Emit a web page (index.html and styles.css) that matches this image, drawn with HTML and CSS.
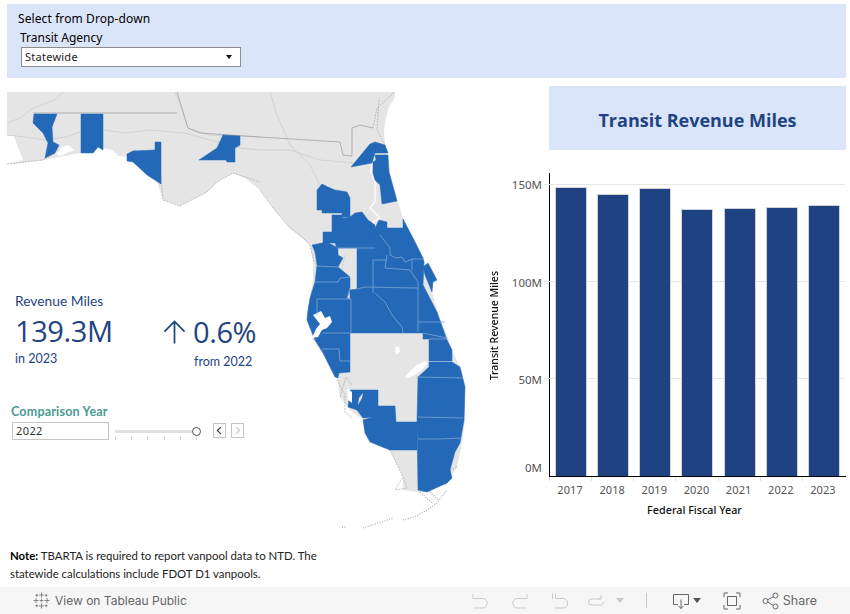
FILE: index.html
```html
<!DOCTYPE html>
<html lang="en">
<head>
<meta charset="utf-8">
<title>Transit Revenue Miles</title>
<link rel="stylesheet" href="styles.css">
</head>
<body>
<div class="page">
  <section class="filter">
    <div class="filter-title">Select from Drop-down</div>
    <div class="filter-label">Transit Agency</div>
    <div class="select"><span>Statewide</span><i class="caret"></i></div>
  </section>

  <div class="main">
    <section class="left">
      <svg class="map" viewBox="7 92 470 445" aria-hidden="true">
        <!-- land -->
        <path class="land" d="M7 92H395L394 99 389 107 386 118 384 130 385 145 387 155 390 172 395 192 403 218 413 238 423 258 430 283 438 315 447 335 452 350 460 367 465 387 465 420 462 443 457 467 447 483 427 492 418 492 403 490 403 477 390 450 378 446 370 440 363 420 350 410 340 397 337 377 323 353 313 340 307 320 307 315 310 298 313 280 313 262 310 245 290 228 273 208 260 190 245 178 233 173 217 182 207 192 180 206 163 200 157 182 147 172 127 157 100 153 80 153 43 160 20 163 7 164Z"/>
        <!-- white water on land -->
        <path class="water" d="M7 136L14 136 19 150 23 160 12 163 7 164ZM55 153L62 147 68 145 74 150 60 156ZM93 153L98 147 112 150 118 155 106 155ZM395 347L399 346 400 352 396 355ZM405 376L417 365 425 361 428 363 420 372 408 378Z"/>
        <path class="river" d="M372 163L371 172 375 182 375 202 370 208 380 218 373 222 380 232"/>
        <!-- borders and roads -->
        <path class="road" d="M7 123L20 118 33 108 55 100 63 92M7 135L25 137 45 140 66 137 80 132 103 130 125 133 150 130 185 133 210 140 240 148 260 150 290 150 320 160 355 163M175 92L182 110 188 128 210 135 260 137M270 92L277 115 290 145 310 165 320 185M320 185L325 195M345 255L342 268 345 280"/>
        <path class="border" d="M33 113H177M177 92L181 105 188 128 200 133 260 137 340 142 343 155 352 156 352 128 360 125 373 128"/>
        <path class="coast" d="M7 164L43 160 60 150M127 157L135 150 160 165 163 200 180 206 207 192 217 182 233 173 260 182M260 190L273 208 290 228 300 235 310 245M373 128L377 108 395 92M379 100L377 130 385 145M310 245L314 262M337 380L345 395 345 412 352 418M340 397L346 377 352 385M390 450L403 477 407 488 395 490 403 477M457 467L451 470 449 478 445 486M373 433L390 450"/>
        <!-- service areas -->
        <g class="blue">
          <path d="M34 114H57L52 127 53 142 59 145 55 153 45 158 48 143 43 133 33 123Z"/>
          <path d="M81 114H103V150L98 147 93 153H81Z"/>
          <path d="M127 154L133 151 155 150V142H161V184L147 175 133 162 127 161Z"/>
          <path d="M199 160L217 148 223 135 240 136V145L235 148V162H227L226 160Z"/>
          <path d="M351 167L370 144 375 142 385 145 388 153H375L372 163 351 167Z"/>
          <path d="M375 155H388L389 172 397 201 382 204 380 185 375 180 373 173 373 162 376 160Z"/>
          <path d="M317 190L322 184 328 187 335 190 347 192 350 198V217H342V213H322V210H317Z"/>
          <path d="M332 215H342L343 218 350 217 355 213 362 212 368 220 375 225V248H337L335 243H323V232H332Z"/>
          <path d="M312 245L327 242 338 248V255L343 258 338 267 350 277V290L347 298 351 300 350 333H323L315 340 307 320 308 310 310 298 315 282 317 265 315 252Z"/>
          <path d="M350 290L357 289V248H375V228L379 220 387 222V228H403V219L413 238 423 258 424 262 423 285 437 312 447 340 452 350V361H429V339H423V333H350Z"/>
          <path d="M423 267L428 263 437 280 433 282 432 292 425 275Z"/>
          <path d="M315 340L323 333H350V372L339 373 338 378 335 377 323 353Z"/>
          <path d="M350 390H378V410L373 412V417L363 418 357 410 348 407Z"/>
          <path d="M363 420L373 417V412L378 406H395L396 422H417V450H390L370 442 365 433Z"/>
          <path d="M429 362H452L460 367 465 387 464 420 460 443 455 452 450 470 452 478 447 483 427 492 418 490 417 422 418 377 429 367Z"/>
        </g>
        <path class="bay" d="M313 315L321 311 325 318 330 316 332 322 327 328 322 330 318 337 312 338 316 329 320 324ZM347 388L352 392 352 403 348 400Z"/>
        <path class="leaf" d="M358 405L362 398 363 393 359 398Z"/>
        <path class="lines" d="M337 248H375M380 235L390 248V255M387 255L385 268 410 270 418 282V288M373 260H387M373 260V293M412 259V270M390 255L396 258 402 257 405 262 412 259H423M357 289L365 287 418 288M375 293L385 302 392 315 402 327 403 333M350 288L347 298 351 299H317V315M315 282H338L340 278 350 277M317 266L338 267M351 299V333M418 288V332M418 322H445M423 333L447 338M429 339H447M323 333H350M322 349H339L340 361H350M417 377L463 378M418 417L463 418M418 439H438L462 438"/>
        <path class="keys" d="M363 528L372 525 385 521 393 518M403 520L416 516 427 510 437 503 447 490M420 492L432 503M430 492L438 500M342 527H346"/>
      </svg>

      <div class="kpis">
        <div class="kpi-main">
          <div class="kpi-label">Revenue Miles</div>
          <div class="kpi-value">139.3M</div>
          <div class="kpi-sub">in 2023</div>
        </div>
        <div class="kpi-change">
          <div class="kpi-row">
            <svg class="arrow" viewBox="0 0 24 26" aria-hidden="true"><path d="M12 25V2M1.500 12.500L12 2 22.500 12.500"/></svg>
            <span class="kpi-value">0.6%</span>
          </div>
          <div class="kpi-sub kpi-from">from 2022</div>
        </div>
      </div>

      <div class="compare">
        <div class="compare-title">Comparison Year</div>
        <div class="compare-row">
          <div class="year-input">2022</div>
          <div class="slider">
            <div class="track"><span class="thumb"></span></div>
            <div class="ticks"><i></i><i></i><i></i><i></i><i></i><i></i></div>
          </div>
          <div class="step"><svg viewBox="0 0 13 13" aria-hidden="true"><path d="M8 2.500L4 6.500 8 10.500"/></svg></div>
          <div class="step step-off"><svg viewBox="0 0 13 13" aria-hidden="true"><path d="M5 2.500L9 6.500 5 10.500"/></svg></div>
        </div>
      </div>

      <p class="note"><b>Note:</b> TBARTA is required to report vanpool data to NTD. The statewide calculations include FDOT D1 vanpools.</p>
    </section>

    <section class="right">
      <h1 class="title">Transit Revenue Miles</h1>
      <div class="chart">
        <div class="y-title"><span>Transit Revenue Miles</span></div>
        <div class="y-axis">
          <div class="y-tick">150M</div>
          <div class="y-tick">100M</div>
          <div class="y-tick">50M</div>
          <div class="y-tick y-zero">0M</div>
        </div>
        <div class="plot">
          <div class="gridlines"><i></i><i></i><i></i></div>
          <div class="bar" style="height:289px"></div>
          <div class="bar" style="height:282px"></div>
          <div class="bar" style="height:288px"></div>
          <div class="bar" style="height:267px"></div>
          <div class="bar" style="height:268px"></div>
          <div class="bar" style="height:269px"></div>
          <div class="bar" style="height:271px"></div>
        </div>
        <div class="x-axis">
          <span>2017</span><span>2018</span><span>2019</span><span>2020</span><span>2021</span><span>2022</span><span>2023</span>
        </div>
        <div class="x-title">Federal Fiscal Year</div>
      </div>
    </section>
  </div>

  <footer class="toolbar">
    <div class="tb-link">
      <svg class="tb-logo" viewBox="0 0 18 18" aria-hidden="true"><path d="M9 0.500V6M6.300 3.200H11.700M9 12V17.500M6.300 14.800H11.700M3.200 6.300V11.700M0.500 9H6M14.800 6.300V11.700M12 9H17.500M9 7V11M7 9H11M4 2V5M2.500 3.500H5.500M14 2V5M12.500 3.500H15.500M4 13V16M2.500 14.500H5.500M14 13V16M12.500 14.500H15.500"/></svg>
      <span>View on Tableau Public</span>
    </div>
    <div class="tb-tools">
      <svg class="ic ic-off" viewBox="0 0 18 18" aria-hidden="true"><path d="M2 2V6.500H6.500M2.500 6.500H11.500A4.700 4.700 0 0 1 11.500 16H3"/></svg>
      <svg class="ic ic-off" viewBox="0 0 18 18" aria-hidden="true"><path d="M16 2V6.500H11.500M15.500 6.500H6.500A4.700 4.700 0 0 0 6.500 16H15"/></svg>
      <svg class="ic ic-off ic-third" viewBox="0 0 18 18" aria-hidden="true"><path d="M1.500 1.500V7M4.500 2V6.500H9M5 6.500H12A4.700 4.700 0 0 1 12 16H4"/></svg>
      <svg class="ic ic-off ic-wide" viewBox="0 0 18 18" aria-hidden="true"><path d="M14 3.500V7H10.500M13.500 7H4.500A2.800 2.800 0 0 0 4.500 13H13.500A2.800 2.800 0 0 0 16.500 10"/></svg>
      <i class="tb-caret tb-caret-off"></i>
      <span class="tb-sep"></span>
      <svg class="ic ic-on ic-dl" viewBox="0 0 18 18" aria-hidden="true"><path d="M6 12.500H1.500V2.500H16.500V12.500H12M9 7.500V16.500M6.500 14L9 16.500 11.500 14"/></svg>
      <i class="tb-caret"></i>
      <svg class="ic ic-on ic-full" viewBox="0 0 18 18" aria-hidden="true"><path d="M1 5V1H5M13 1H17V5M1 13V17H5M13 17H17V13M4.500 4.500H13.500V13.500H4.500Z"/></svg>
      <div class="tb-share">
        <svg class="ic ic-on" viewBox="0 0 18 18" aria-hidden="true"><circle cx="13.500" cy="3.500" r="2.500"/><circle cx="13.500" cy="14.500" r="2.500"/><circle cx="3.500" cy="9" r="2.500"/><path d="M5.700 7.800L11.300 4.700M5.700 10.200L11.300 13.300"/></svg>
        <span>Share</span>
      </div>
    </div>
  </footer>
</div>
</body>
</html>
```

FILE: styles.css
```css
* { box-sizing: border-box; }
html, body { margin: 0; padding: 0; background: #fff; }
body { font-family: "Noto Sans", "Open Sans", sans-serif; color: #000; }
.page { width: 850px; height: 614px; display: flex; flex-direction: column; overflow: hidden; }

/* filter band */
.filter { height: 74px; margin: 4px 4px 8px 7px; padding: 7px 0 0 11px; background: #dbe5f9; }
.filter-title { font-size: 12px; line-height: 15px; letter-spacing: .1px; }
.filter-label { font-size: 12px; line-height: 15px; margin: 4px 0 0 2px; }
.select { width: 220px; height: 20px; margin: 2px 0 0 3px; padding: 0 8px 2px 3px; display: flex; align-items: center; justify-content: space-between; background: #fff; border: 1px solid #8c8c8c; font-size: 11px; letter-spacing: .25px; color: #222; }
.caret { width: 0; height: 0; margin-top: 2px; border: 3.500px solid transparent; border-top: 4px solid #111; border-bottom: 0; }

/* main */
.main { display: flex; height: 501px; margin-left: 7px; }
.left { position: relative; width: 477px; flex: none; }
.map { position: absolute; left: 0; top: 6px; width: 470px; height: 445px; filter: blur(.35px); }
.land { fill: #e5e5e5; }
.water { fill: #fff; }
.river { fill: none; stroke: #fff; stroke-width: 1.300; }
.road { fill: none; stroke: #cdcdcd; stroke-width: .8; }
.border { fill: none; stroke: #9a9a9a; stroke-width: .7; }
.coast { fill: none; stroke: #ababab; stroke-width: .7; stroke-dasharray: 2 1; }
.blue path { fill: #2369b8; stroke: #2369b8; stroke-width: .5; stroke-linejoin: round; }
.bay { fill: #fff; }
.leaf { fill: #e5e5e5; }
.lines { fill: none; stroke: #7fa6d3; stroke-width: .8; }
.keys { fill: none; stroke: #b0b0b0; stroke-width: 1.300; stroke-dasharray: 1 1.500; }

.kpis { position: relative; display: flex; padding: 207px 0 0 8px; color: #1f4482; font-family: "Lato", sans-serif; }
.kpi-main { width: 148px; }
.kpi-label { font-size: 13.800px; line-height: 16px; }
.kpi-value { font-size: 29px; line-height: 34px; font-family: "Open Sans", sans-serif; letter-spacing: -.4px; }
.kpi-main .kpi-value { margin-top: 5px; }
.kpi-sub { font-size: 12.500px; line-height: 15px; margin-top: 3px; }
.kpi-change { padding-top: 22px; }
.kpi-row { display: flex; align-items: center; gap: 7px; }
.arrow { width: 23px; height: 26px; fill: none; stroke: #1f4482; stroke-width: 1.800; }
.kpi-from { margin: 5px 0 0 31px; }

.compare { position: relative; margin: 35px 0 0 4px; }
.compare-title { font-family: "Lato", sans-serif; font-weight: 700; font-size: 12.500px; line-height: 15px; color: #4a9a94; letter-spacing: .2px; }
.compare-row { display: flex; align-items: flex-start; margin: 3px 0 0 1px; }
.year-input { width: 97px; height: 18px; padding-left: 3px; border: 1px solid #c6c6c6; background: #fff; font-size: 11px; line-height: 16px; letter-spacing: .4px; color: #333; }
.slider { width: 82px; margin: 8px 0 0 6px; }
.track { position: relative; height: 3px; background: #e0e0e0; }
.thumb { position: absolute; right: -4px; top: -3px; width: 9px; height: 9px; border-radius: 50%; border: 1px solid #555; background: #fff; }
.ticks { display: flex; justify-content: space-between; margin-top: 3px; }
.ticks i { width: 1px; height: 4px; background: #d4d4d4; }
.step { width: 13px; height: 15px; margin: 1px 0 0 5px; border: 1px solid #c4c4c4; background: #fff; }
.slider + .step { margin-left: 16px; }
.step svg { display: block; width: 11px; height: 13px; fill: none; stroke: #444; stroke-width: 1.500; }
.step-off svg { stroke: #c8c8c8; }

.note { position: relative; margin: 107px 0 0 3px; width: 320px; font-family: "Lato", sans-serif; font-size: 11.400px; line-height: 18px; color: #222; }
.note b { font-weight: 700; color: #000; }

/* right */
.right { width: 362px; flex: none; }
.title { height: 64px; margin: 0 0 23px 65px; padding-top: 4px; display: flex; align-items: center; justify-content: center; background: #dbe5f9; font-family: "Open Sans", sans-serif; font-size: 18px; font-weight: 700; color: #1f4482; }
.chart { display: grid; grid-template-columns: 20px 45px 297px; grid-template-rows: 304px 26px 16px; }
.y-title { grid-row: 1; display: flex; align-items: center; justify-content: center; padding-top: 1px; }
.y-title span { writing-mode: vertical-rl; transform: rotate(180deg); font-size: 10.500px; font-weight: 500; color: #111; white-space: nowrap; }
.y-axis { padding: 5px 7px 0 0; text-align: right; font-size: 11.500px; line-height: 14px; color: #555; }
.y-tick { height: 97.500px; }
.y-zero { margin-top: -9.500px; height: 14px; }
.plot { position: relative; display: grid; grid-template-columns: repeat(7, 1fr); align-items: end; padding-right: 1px; border-left: 1px solid #000; border-bottom: 1px solid #000; height: 304px; }
.gridlines { position: absolute; left: -6px; right: 1px; top: 11px; }
.gridlines i { display: block; height: 97px; border-top: 1px solid #e6e6e6; }
.bar { position: relative; justify-self: center; width: 32px; background: #1f4282; border: 1px solid #d3d3d3; border-bottom: 0; }
.x-axis { grid-column: 3; display: grid; grid-template-columns: repeat(7, 1fr); padding: 0 2px 0 0; font-size: 11px; line-height: 14px; color: #555; text-align: center; letter-spacing: .1px; }
.x-axis span { padding-top: 6px; background: linear-gradient(#e2e2e2, #e2e2e2) left top / 1px 4px no-repeat; }
.x-title { grid-column: 3; text-align: center; font-size: 10.800px; line-height: 14px; font-weight: 500; color: #111; padding-right: 6px; }

/* toolbar */
.toolbar { flex: 1; display: flex; align-items: center; justify-content: space-between; padding: 0 33px 0 33px; background: #f6f6f6; font-family: "Inter", sans-serif; font-size: 12px; color: #666; }
.tb-link { display: flex; align-items: center; gap: 5px; }
.tb-logo { width: 17px; height: 17px; fill: none; stroke: #777; stroke-width: .9; }
.tb-tools { display: flex; align-items: center; }
.ic { width: 18px; height: 18px; fill: none; stroke-width: 1; flex: none; }
.ic-off { stroke: #c9c9c9; margin-right: 22px; }
.ic-third { margin-right: 18px; }
.ic-wide { margin-right: 11px; }
.ic-on { stroke: #666; }
.ic-dl { margin-left: 25px; }
.tb-caret { width: 0; height: 0; margin-left: 3px; border: 4px solid transparent; border-top: 5px solid #555; border-bottom: 0; }
.tb-caret-off { margin-left: 0; border-top-color: #c9c9c9; }
.tb-sep { width: 1px; height: 15px; margin-left: 22px; background: #c9c9c9; }
.ic-full { margin-left: 22px; }
.tb-share { display: flex; align-items: center; gap: 3px; margin-left: 21px; font-size: 12.500px; }
```
